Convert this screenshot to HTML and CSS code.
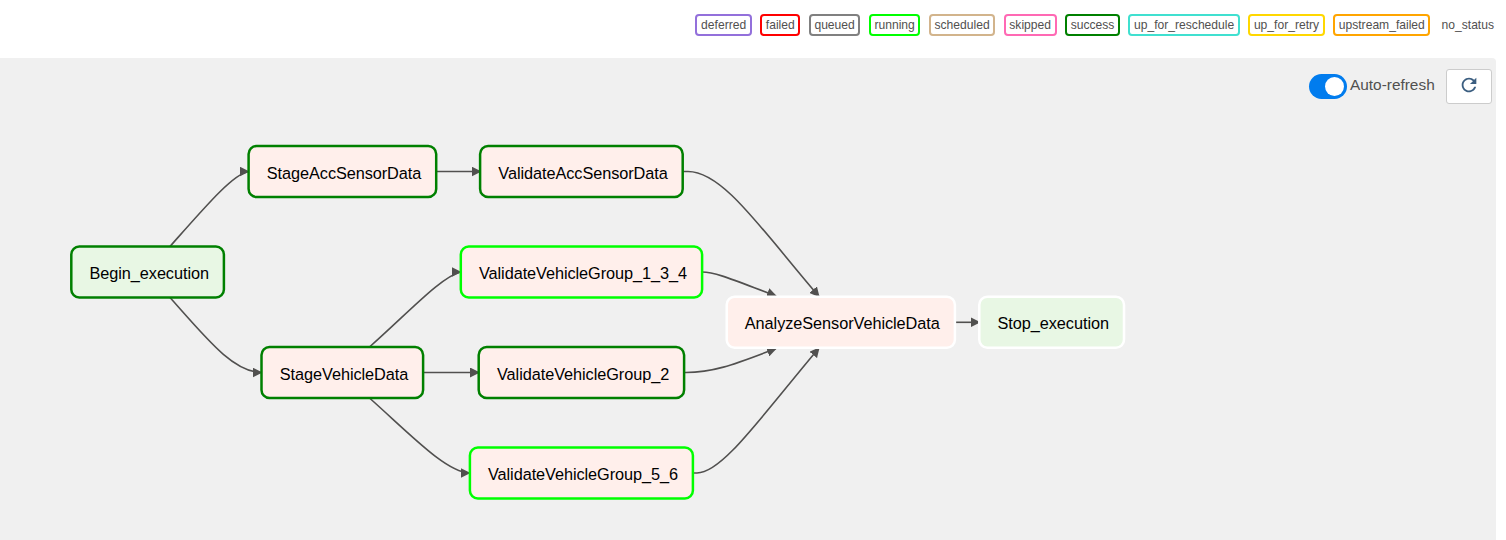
FILE: index.html
```html
<!DOCTYPE html>
<html lang="en">
<head>
<meta charset="utf-8">
<title>DAG graph</title>
<link rel="stylesheet" href="styles.css">
</head>
<body>
<div class="page">
  <header class="legend">
    <span class="state deferred">deferred</span>
    <span class="state failed">failed</span>
    <span class="state queued">queued</span>
    <span class="state running">running</span>
    <span class="state scheduled">scheduled</span>
    <span class="state skipped">skipped</span>
    <span class="state success">success</span>
    <span class="state reschedule">up_for_reschedule</span>
    <span class="state retry">up_for_retry</span>
    <span class="state upstream">upstream_failed</span>
    <span class="state none">no_status</span>
  </header>
  <main class="graph">
    <svg class="canvas" viewBox="0 58 1496 482" width="1496" height="482">
      <defs>
        <marker id="arrow" markerUnits="userSpaceOnUse" viewBox="0 0 10 10" refX="9" refY="5" markerWidth="10" markerHeight="10" orient="auto">
          <path class="arrowhead" d="M0 0L10 5L0 10z"/>
        </marker>
        <marker id="arrow-flat" markerUnits="userSpaceOnUse" viewBox="0 0 10 10" refX="9" refY="5" markerWidth="10" markerHeight="10" orient="0">
          <path class="arrowhead" d="M0 0L10 5L0 10z"/>
        </marker>
      </defs>
      <g class="edges">
        <path class="flat" d="M170 246.500C205 207 233 174 248.500 171.500"/>
        <path class="flat" d="M170 297.500C207 339 233 372 261.500 372.500"/>
        <path class="flat" d="M436 171.500H480.500"/>
        <path class="flat" d="M423 372.500H479"/>
        <path class="flat" d="M369.500 347C410 311 441 277 460.500 272"/>
        <path class="flat" d="M369.500 398C412 436 446 472 469.500 473"/>
        <path d="M683 171.500H688C723 171.500 761 229 819 296.500"/>
        <path d="M702 272C716 272 736 281 776 296"/>
        <path d="M684 372.500C715 373 740 362 776 348.500"/>
        <path d="M693 473H697C722 473 760 418 819 348"/>
        <path class="flat" d="M955 322.300H979.500"/>
      </g>
      <g class="nodes">
        <rect class="op-dummy st-success" x="71.300" y="246.500" width="152.600" height="51" rx="8"/>
        <rect class="op-task st-success" x="248.600" y="146" width="187.600" height="51" rx="8"/>
        <rect class="op-task st-success" x="480.100" y="146" width="202.600" height="51" rx="8"/>
        <rect class="op-task st-running" x="460.800" y="246.500" width="241.300" height="51" rx="8"/>
        <rect class="op-task st-success" x="261.500" y="347" width="161.600" height="51" rx="8"/>
        <rect class="op-task st-success" x="478.700" y="347" width="205.400" height="51" rx="8"/>
        <rect class="op-task st-running" x="469.900" y="447.500" width="223" height="51" rx="8"/>
        <rect class="op-task st-none" x="726.700" y="296.800" width="228.200" height="51" rx="8"/>
        <rect class="op-dummy st-none" x="979.300" y="296.800" width="144.700" height="51" rx="8"/>
      </g>
      <g class="labels">
        <text x="89.500" y="279" textLength="119.500">Begin_execution</text>
        <text x="266.800" y="178.800" textLength="154.500">StageAccSensorData</text>
        <text x="498.300" y="178.800" textLength="169.500">ValidateAccSensorData</text>
        <text x="479" y="279" textLength="208">ValidateVehicleGroup_1_3_4</text>
        <text x="279.800" y="379.800" textLength="128.500">StageVehicleData</text>
        <text x="497" y="379.800" textLength="172.200">ValidateVehicleGroup_2</text>
        <text x="488" y="480" textLength="190">ValidateVehicleGroup_5_6</text>
        <text x="744.800" y="329" textLength="195">AnalyzeSensorVehicleData</text>
        <text x="997.500" y="329" textLength="111.500">Stop_execution</text>
      </g>
    </svg>
    <div class="controls">
      <span class="switch"><span class="knob"></span></span>
      <span class="switch-label">Auto-refresh</span>
      <button class="refresh" aria-label="Refresh">
        <svg width="22" height="22" viewBox="0 0 24 24"><path d="M17.650 6.350C16.200 4.900 14.210 4 12 4c-4.420 0-7.990 3.580-7.990 8s3.570 8 7.990 8c3.730 0 6.840-2.550 7.730-6h-2.080c-.82 2.330-3.040 4-5.650 4-3.310 0-6-2.690-6-6s2.690-6 6-6c1.660 0 3.140.69 4.220 1.780L13 11h7V4l-2.350 2.350z"/></svg>
      </button>
    </div>
  </main>
</div>
</body>
</html>
```

FILE: styles.css
```css
* { box-sizing: border-box; }
body {
  margin: 0;
  background: #fff;
  color: #51504f;
  font-family: "Liberation Sans", Arial, sans-serif;
  overflow: hidden;
}
.page { width: 1496px; height: 540px; }
.legend {
  display: flex;
  justify-content: flex-end;
  gap: 8.400px;
  height: 58px;
  padding-top: 14px;
}
.state {
  height: 22px;
  padding: 0 3.650px;
  border: 2px solid;
  border-radius: 4px;
  font-size: 12.100px;
  line-height: 18px;
  white-space: nowrap;
}
.deferred { border-color: mediumpurple; }
.failed { border-color: red; }
.queued { border-color: gray; }
.running { border-color: lime; }
.scheduled { border-color: tan; }
.skipped { border-color: hotpink; }
.success { border-color: green; }
.reschedule { border-color: turquoise; }
.retry { border-color: gold; }
.upstream { border-color: orange; }
.none { border-color: white; padding: 0 0 0 .7px; }
.graph {
  position: relative;
  height: 482px;
  background: #f0f0f0;
  border-radius: 0 4px 0 0;
}
.canvas { display: block; }
.edges path {
  fill: none;
  stroke: #51504f;
  stroke-width: 1.600;
  marker-end: url(#arrow);
}
.edges .flat { marker-end: url(#arrow-flat); }
.arrowhead { fill: #51504f; }
.nodes rect { stroke-width: 2.500; }
.nodes .op-task { fill: #ffefeb; }
.nodes .op-dummy { fill: #e8f7e4; }
.st-success { stroke: green; }
.st-running { stroke: lime; }
.st-none { stroke: white; }
.labels { fill: #000; font-size: 16.300px; }
.controls {
  position: absolute;
  top: 11px;
  right: 4px;
  display: flex;
  align-items: flex-start;
}
.switch {
  width: 38px;
  height: 25px;
  margin: 5px 3px 0 0;
  padding: 3px;
  border-radius: 13px;
  background: #017cee;
  display: flex;
  justify-content: flex-end;
}
.knob { width: 19px; height: 19px; border-radius: 50%; background: #fff; }
.switch-label {
  width: 96px;
  font-size: 15.400px;
  line-height: 32px;
  white-space: nowrap;
}
.refresh {
  width: 46px;
  height: 35px;
  padding: 0 0 3px;
  border: 1px solid #ccc;
  border-radius: 3px;
  background: #fff;
  display: flex;
  align-items: center;
  justify-content: center;
}
.refresh svg { fill: #3b5e80; }
```
